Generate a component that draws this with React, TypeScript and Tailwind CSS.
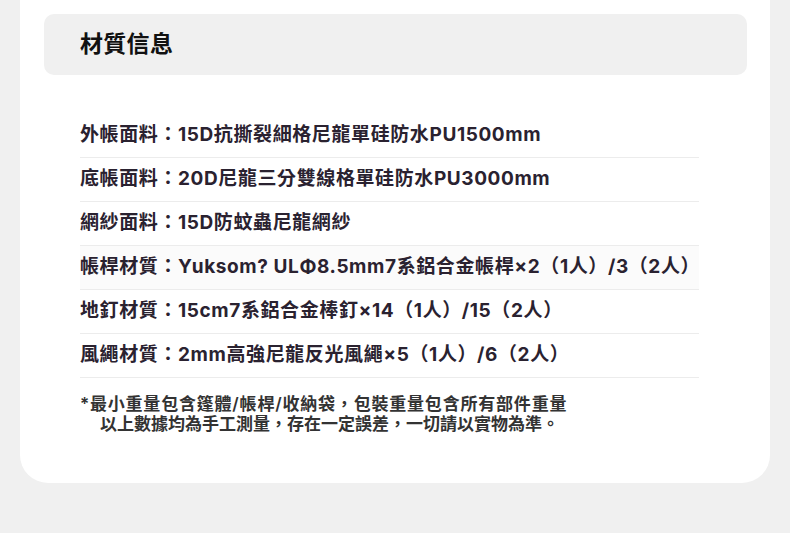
import React from "react";

const ROWS: { label: string; value: string; shade?: boolean }[] = [
  { label: "外帳面料", value: "15D抗撕裂細格尼龍單硅防水PU1500mm" },
  { label: "底帳面料", value: "20D尼龍三分雙線格單硅防水PU3000mm" },
  { label: "網紗面料", value: "15D防蚊蟲尼龍網紗" },
  { label: "帳桿材質", value: "Yuksom? ULΦ8.5mm7系鋁合金帳桿×2（1人）/3（2人）", shade: true },
  { label: "地釘材質", value: "15cm7系鋁合金棒釘×14（1人）/15（2人）" },
  { label: "風繩材質", value: "2mm高強尼龍反光風繩×5（1人）/6（2人）" },
];

const FONT = "font-['Inter','Noto_Sans_CJK_TC',sans-serif]";

export default function App() {
  return (
    <div className={`h-[533px] w-[790px] overflow-hidden bg-[#f0f0f0] ${FONT}`}>
      <div className="mx-5 h-[483px] rounded-b-[28px] bg-white pt-[14px]">
        <div className="ml-6 mr-[23px] flex h-[61px] items-center rounded-[10px] bg-[#f0f0f0] pl-9">
          <h2 className="text-[23px] font-bold tracking-[0.3px] text-[#111]">材質信息</h2>
        </div>

        <div className="ml-[60px] mt-[39px] w-[619px]">
          {ROWS.map((row) => (
            <div
              key={row.label}
              className={`flex h-[44px] items-center border-b border-[#ececec] text-[19px] font-bold tracking-[0.6px] text-[#2a2230] ${
                row.shade ? "bg-[#fbfbfb]" : ""
              }`}
            >
              <span className="whitespace-nowrap">
                {row.label}：{row.value}
              </span>
            </div>
          ))}

          <div className="mt-[16px] text-[17px] font-semibold leading-[20px] text-[#333]">
            <p className="whitespace-nowrap tracking-[0.8px]">
              *最小重量包含篷體/帳桿/收納袋，包裝重量包含所有部件重量
            </p>
            <p className="whitespace-nowrap pl-5">以上數據均為手工測量，存在一定誤差，一切請以實物為準。</p>
          </div>
        </div>
      </div>
    </div>
  );
}
